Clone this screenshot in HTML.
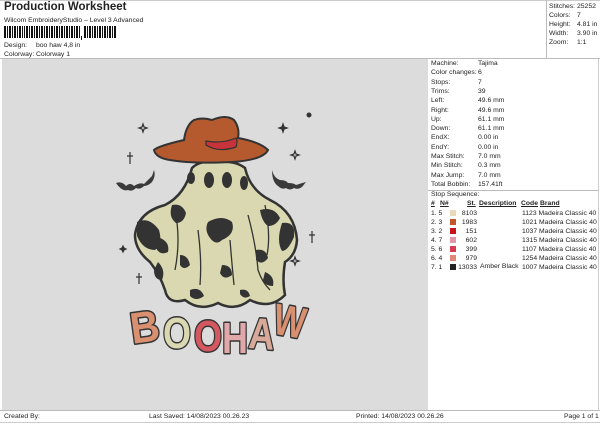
<!DOCTYPE html>
<html><head><style>
*{margin:0;padding:0;box-sizing:border-box}
body{width:600px;height:424px;background:#fff;font-family:"Liberation Sans",sans-serif;color:#222;position:relative;overflow:hidden}
.a{position:absolute;white-space:nowrap;font-size:6.8px}
.t{position:absolute;left:4px;top:1px;font-size:11.5px;font-weight:bold}
.k{left:431px}.v{left:478px}
</style></head><body>
<div class="t">Production Worksheet</div>
<div class="a" style="left:4px;top:17px">Wilcom EmbroideryStudio – Level 3 Advanced</div>
<svg style="position:absolute;left:4px;top:26px" width="115" height="14">
<g fill="#111">
<rect x="0" y="0" width="2" height="12"/><rect x="3" y="0" width="1" height="12"/><rect x="5" y="0" width="2" height="12"/><rect x="8" y="0" width="1" height="12"/><rect x="10" y="0" width="2" height="12"/><rect x="13" y="0" width="1" height="12"/><rect x="15" y="0" width="2" height="12"/><rect x="18" y="0" width="1" height="12"/><rect x="20" y="0" width="1" height="12"/><rect x="22" y="0" width="2" height="12"/><rect x="25" y="0" width="1" height="12"/><rect x="27" y="0" width="2" height="12"/><rect x="30" y="0" width="1" height="12"/><rect x="32" y="0" width="2" height="12"/><rect x="35" y="0" width="1" height="12"/><rect x="37" y="0" width="2" height="12"/><rect x="40" y="0" width="1" height="12"/><rect x="42" y="0" width="2" height="12"/><rect x="45" y="0" width="1" height="12"/><rect x="47" y="0" width="2" height="12"/><rect x="50" y="0" width="1" height="12"/><rect x="52" y="0" width="2" height="12"/><rect x="55" y="0" width="1" height="12"/><rect x="57" y="0" width="2" height="12"/><rect x="60" y="0" width="1" height="12"/><rect x="62" y="0" width="2" height="12"/><rect x="65" y="0" width="1" height="12"/><rect x="67" y="0" width="2" height="12"/><rect x="70" y="0" width="1" height="12"/><rect x="72" y="0" width="2" height="12"/><rect x="75" y="0" width="1" height="12"/>
<rect x="77" y="10" width="1" height="4"/>
<rect x="80" y="0" width="2" height="12"/><rect x="83" y="0" width="1" height="12"/><rect x="85" y="0" width="2" height="12"/><rect x="88" y="0" width="1" height="12"/><rect x="90" y="0" width="2" height="12"/><rect x="93" y="0" width="1" height="12"/><rect x="95" y="0" width="2" height="12"/><rect x="98" y="0" width="1" height="12"/><rect x="100" y="0" width="2" height="12"/><rect x="103" y="0" width="1" height="12"/><rect x="105" y="0" width="2" height="12"/><rect x="108" y="0" width="1" height="12"/><rect x="110" y="0" width="2" height="12"/>
</g></svg>
<div class="a" style="left:4px;top:42px">Design:</div><div class="a" style="left:36px;top:42px">boo haw 4,8 in</div>
<div class="a" style="left:4px;top:51px">Colorway:</div><div class="a" style="left:36px;top:51px">Colorway 1</div>
<div style="position:absolute;left:0;top:0;width:600px;height:1px;background:#ccc"></div>
<div style="position:absolute;left:546px;top:0;width:1px;height:58px;background:#bbb"></div>
<div style="position:absolute;left:0;top:58px;width:600px;height:1px;background:#bbb"></div>
<div class="a" style="left:549px;top:3px">Stitches:</div><div class="a" style="left:577px;top:3px">25252</div>
<div class="a" style="left:549px;top:12px">Colors:</div><div class="a" style="left:577px;top:12px">7</div>
<div class="a" style="left:549px;top:21px">Height:</div><div class="a" style="left:577px;top:21px">4.81 in</div>
<div class="a" style="left:549px;top:30px">Width:</div><div class="a" style="left:577px;top:30px">3.90 in</div>
<div class="a" style="left:549px;top:39px">Zoom:</div><div class="a" style="left:577px;top:39px">1:1</div>

<div style="position:absolute;left:2px;top:59px;width:426px;height:351px;background:#dcdcdc"></div>
<div style="position:absolute;left:0;top:410px;width:600px;height:1px;background:#bbb"></div>
<div style="position:absolute;left:598px;top:59px;width:1px;height:352px;background:#ccc"></div>

<svg style="position:absolute;left:0;top:0" width="430" height="410">
<g stroke="#333" stroke-width="1.2" fill="none">
<path d="M143 124l1 3 3 1-3 1-1 3-1-3-3-1 3-1z"/><path d="M283 124l1 3 3 1-3 1-1 3-1-3-3-1 3-1z" fill="#333"/>
<path d="M295 151l1 3 3 1-3 1-1 3-1-3-3-1 3-1z"/><path d="M123 246l1 2 2 1-2 1-1 2-1-2-2-1 2-1z" fill="#333"/>
<path d="M295 257l1 3 3 1-3 1-1 3-1-3-3-1 3-1z"/>
<path d="M130 152v12M127 156h6M139 273v11M136 277h6M312 231v12M309 235h6"/>
</g>
<circle cx="309" cy="115" r="2.5" fill="#333"/>
<path d="M116 183q6-2 10 3q4-4 8 0q6-4 10-2q4-4 8-8l2-6q2 6-2 12q-4 4-8 4q-4 4-8 2q-4 4-8 2q-6 2-12-7z" fill="#3a3a3a"/>
<path d="M272 170q2 8 8 10q6 0 8 3q6 0 8 2q6-2 10-3l-4 5q-4 3-8 1q-4 3-8 0q-4 2-8-2q-6-4-6-16z" fill="#3a3a3a"/>
<path d="M192 168Q200 160 215 162Q235 160 245 168Q250 190 270 200Q295 212 297 240Q296 255 285 262Q282 280 285 295Q270 310 250 300Q235 312 218 303Q200 312 185 300Q168 305 165 290Q160 275 150 262Q135 250 135 235Q138 212 165 205Q185 195 192 168Z" fill="#d9d8b0" stroke="#333" stroke-width="2.5"/>
<g fill="none" stroke="#333" stroke-width="1.3"><path d="M175 210q6 30 0 60"/><path d="M198 230q4 30 2 55"/><path d="M230 240q2 25 4 45"/><path d="M248 215q8 30 10 55q4 12 12 20"/><path d="M265 205q6 30 2 50"/></g>
<g fill="#333">
<ellipse cx="209" cy="180" rx="5" ry="8"/><ellipse cx="227" cy="180" rx="5" ry="8"/><ellipse cx="244" cy="183" rx="4" ry="7"/><ellipse cx="191" cy="178" rx="4" ry="6"/>
<path d="M137 222q12-6 22 8q4 14-4 20q-12 0-18-14z"/><path d="M172 205q10-2 14 8q-2 10-10 10q-8-6-4-18z"/>
<path d="M208 222q14-8 24 0q4 12-10 18q-6 6-12-2q-6-8-2-16z"/><path d="M260 210q14-4 20 8q-4 8-12 8q-6-4-8-16z"/>
<path d="M282 223q14-2 12 14q-6 14-12 14q-6-10 0-28z"/><path d="M160 238q10 4 8 14q-8 4-12-4z"/><path d="M180 255q8 0 10 10q-6 6-10 0z"/>
<path d="M158 262q8 8 4 18q-8 0-8-10z"/><path d="M222 265q10 0 10 10q-8 6-12-2z"/><path d="M256 250q10-2 12 8q-6 8-12 2z"/><path d="M265 272q10 4 8 14q-8 0-10-6z"/><path d="M190 290q10-4 14 6q-8 6-14 0z"/><path d="M240 290q8-2 10 6q-6 4-10-2z"/>
</g>
<path d="M154 150q4-4 30-10q2-15 10-20q8-3 18 0q14-6 22 0q6 8 4 18q22 4 30 12q-5 10-36 12q-40 2-62-2q-14-2-16-10z" fill="#b45a2e" stroke="#333" stroke-width="2"/>
<path d="M206 145q12 8 30 2q2-6 0-9q-14 6-30 3z" fill="#c8323a" stroke="#333" stroke-width="1.2"/>
<g stroke="#333" stroke-width="3" stroke-linejoin="round" font-family="Liberation Sans" font-weight="bold" font-size="44" paint-order="stroke">
<text x="130" y="342" fill="#d99070" textLength="29" lengthAdjust="spacingAndGlyphs" transform="rotate(-8 145 325)">B</text>
<text x="163" y="348" fill="#d9d8b0" textLength="28" lengthAdjust="spacingAndGlyphs">O</text>
<text x="194" y="351" fill="#d45860" textLength="28" lengthAdjust="spacingAndGlyphs">O</text>
<text x="222" y="353" fill="#e0a8a8" textLength="26" lengthAdjust="spacingAndGlyphs">H</text>
<text x="249" y="349" fill="#d8a898" textLength="26" lengthAdjust="spacingAndGlyphs" transform="rotate(4 262 330)">A</text>
<text x="274" y="336" fill="#d99070" textLength="32" lengthAdjust="spacingAndGlyphs" transform="rotate(10 288 320)">W</text>
</g>
</svg>

<div class="a k" style="top:60px">Machine:</div><div class="a v" style="top:60px">Tajima</div>
<div class="a k" style="top:69.3px">Color changes:</div><div class="a v" style="top:69.3px">6</div>
<div class="a k" style="top:78.6px">Stops:</div><div class="a v" style="top:78.6px">7</div>
<div class="a k" style="top:87.9px">Trims:</div><div class="a v" style="top:87.9px">39</div>
<div class="a k" style="top:97.2px">Left:</div><div class="a v" style="top:97.2px">49.6 mm</div>
<div class="a k" style="top:106.5px">Right:</div><div class="a v" style="top:106.5px">49.6 mm</div>
<div class="a k" style="top:115.8px">Up:</div><div class="a v" style="top:115.8px">61.1 mm</div>
<div class="a k" style="top:125.1px">Down:</div><div class="a v" style="top:125.1px">61.1 mm</div>
<div class="a k" style="top:134.4px">EndX:</div><div class="a v" style="top:134.4px">0.00 in</div>
<div class="a k" style="top:143.7px">EndY:</div><div class="a v" style="top:143.7px">0.00 in</div>
<div class="a k" style="top:153px">Max Stitch:</div><div class="a v" style="top:153px">7.0 mm</div>
<div class="a k" style="top:162.3px">Min Stitch:</div><div class="a v" style="top:162.3px">0.3 mm</div>
<div class="a k" style="top:171.6px">Max Jump:</div><div class="a v" style="top:171.6px">7.0 mm</div>
<div class="a k" style="top:180.9px">Total Bobbin:</div><div class="a v" style="top:180.9px">157.41ft</div>
<div style="position:absolute;left:428px;top:190px;width:170px;height:1px;background:#bbb"></div>
<div class="a k" style="top:191px">Stop Sequence:</div>
<div class="a" style="top:200px;left:431px;font-weight:bold;text-decoration:underline">#</div>
<div class="a" style="top:200px;left:440px;font-weight:bold;text-decoration:underline">N#</div>
<div class="a" style="top:200px;left:467px;font-weight:bold;text-decoration:underline">St.</div>
<div class="a" style="top:200px;left:479px;font-weight:bold;text-decoration:underline">Description</div>
<div class="a" style="top:200px;left:521px;font-weight:bold;text-decoration:underline">Code</div>
<div class="a" style="top:200px;left:540px;font-weight:bold;text-decoration:underline">Brand</div>
<div style="position:absolute;left:431px;top:209px;font-size:6.8px;line-height:9px">
<div>1. 5</div><div>2. 3</div><div>3. 2</div><div>4. 7</div><div>5. 6</div><div>6. 4</div><div>7. 1</div></div>
<div style="position:absolute;left:450px;top:210px">
<div style="width:6px;height:6px;margin-bottom:3px;background:#ead9b8"></div><div style="width:6px;height:6px;margin-bottom:3px;background:#c0582a"></div><div style="width:6px;height:6px;margin-bottom:3px;background:#c8141e"></div><div style="width:6px;height:6px;margin-bottom:3px;background:#e098a8"></div><div style="width:6px;height:6px;margin-bottom:3px;background:#d83c50"></div><div style="width:6px;height:6px;margin-bottom:3px;background:#e08878"></div><div style="width:6px;height:6px;background:#222"></div></div>
<div style="position:absolute;left:455px;width:22px;text-align:right;top:209px;font-size:6.8px;line-height:9px">
<div>8103</div><div>1983</div><div>151</div><div>602</div><div>399</div><div>979</div><div>13033</div></div>
<div class="a" style="left:480px;top:263px">Amber Black</div>
<div style="position:absolute;left:522px;top:209px;font-size:6.8px;line-height:9px;white-space:nowrap">
<div>1123 Madeira Classic 40</div><div>1021 Madeira Classic 40</div><div>1037 Madeira Classic 40</div><div>1315 Madeira Classic 40</div><div>1107 Madeira Classic 40</div><div>1254 Madeira Classic 40</div><div>1007 Madeira Classic 40</div></div>

<div class="a" style="left:4px;top:413px">Created By:</div>
<div class="a" style="left:149px;top:413px">Last Saved: 14/08/2023 00.26.23</div>
<div class="a" style="left:356px;top:413px">Printed: 14/08/2023 00.26.26</div>
<div class="a" style="left:564px;top:413px">Page 1 of 1</div>
<div style="position:absolute;left:0;top:422px;width:600px;height:1px;background:#ccc"></div>
</body></html>
